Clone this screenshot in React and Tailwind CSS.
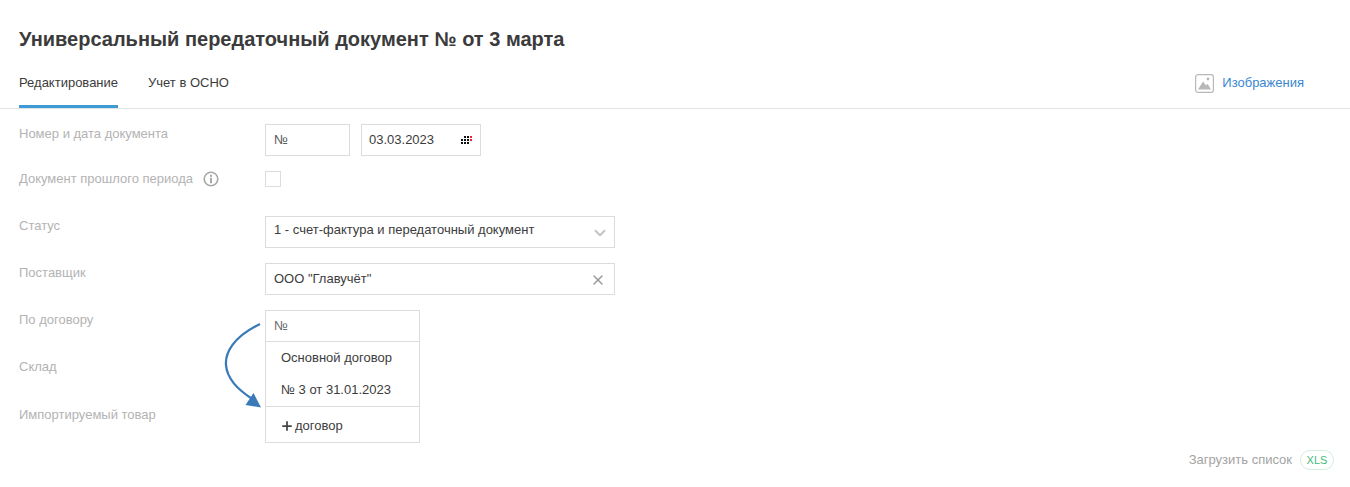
import React from "react";
import { X, ChevronDown, Plus } from "lucide-react";

const labelClass = "w-[246px] shrink-0 pt-[1px] leading-[18px] text-[#b3b3b3]";
const boxClass = "flex h-8 items-center border border-[#dcdcdc] bg-white pl-2";

function CalendarDots() {
  const dots = [
    [3, 0], [6, 0],
    [3, 3], [6, 3], [0, 3],
    [0, 6], [3, 6], [6, 6],
  ];
  return (
    <svg width="11" height="9" viewBox="0 0 11 9" aria-hidden="true">
      {dots.map(([x, y]) => (
        <rect key={`${x}-${y}`} x={x} y={y} width="2" height="2" fill="#111" />
      ))}
      <rect x="9" y="0" width="2" height="2" fill="#ee2233" />
      <rect x="9" y="3" width="2" height="2" fill="#ee2233" />
    </svg>
  );
}

function InfoIcon() {
  return (
    <svg width="16" height="16" viewBox="0 0 16 16" aria-hidden="true">
      <circle cx="8" cy="8" r="6.8" fill="none" stroke="#a8a8a8" strokeWidth="1.6" />
      <rect x="7" y="3.8" width="2" height="2" fill="#a8a8a8" />
      <rect x="7" y="6.8" width="2" height="5.4" fill="#a8a8a8" />
    </svg>
  );
}

function ImageIcon() {
  return (
    <svg width="19" height="19" viewBox="0 0 19 19" aria-hidden="true">
      <rect x="0.6" y="0.6" width="17.8" height="17.8" rx="2.5" fill="none" stroke="#b8b8b8" strokeWidth="1.2" />
      <circle cx="13" cy="5" r="1.4" fill="#b8b8b8" />
      <path d="M3 15.5 L8 7.5 L11 11.5 L12.6 9.8 L16 15.5 Z" fill="#b8b8b8" />
    </svg>
  );
}

function CurveArrow() {
  return (
    <svg
      className="absolute left-[222px] top-[318px]"
      width="46"
      height="92"
      viewBox="0 0 46 92"
      aria-hidden="true"
    >
      <path d="M38 6 C 11 19, 3 35, 4 47 C 5 62, 19 74, 32 82" fill="none" stroke="#3a7ab8" strokeWidth="2.3" />
      <path d="M39 89.5 L23.5 87 L31.5 75 Z" fill="#3a7ab8" />
    </svg>
  );
}

export default function App() {
  return (
    <div className="relative h-[487px] w-[1350px] overflow-hidden bg-white font-['Liberation_Sans',sans-serif] text-[13px] text-[#3c3c3c]">
      <h1 className="px-[19px] pt-[26px] text-[20px] font-bold leading-[26px] text-[#3b3b3b]">
        Универсальный передаточный документ № от 3 марта
      </h1>

      <div className="mt-[16px] flex h-[41px] items-start justify-between border-b border-[#e2e2e2] pl-[19px] pr-[46px]">
        <div className="flex gap-[30px]">
          <div className="h-[40px] border-b-[3px] border-[#3f9bd6] pt-[6px] leading-[18px]">Редактирование</div>
          <div className="pt-[6px] leading-[18px]">Учет в ОСНО</div>
        </div>
        <a className="flex items-center gap-2 pt-[5px] leading-[20px] text-[#3a87cf]" href="#images">
          <ImageIcon />
          Изображения
        </a>
      </div>

      <div className="flex flex-col px-[19px] pt-[15px]">
        <div className="mb-[15px] flex">
          <div className={labelClass}>Номер и дата документа</div>
          <div className="flex gap-[11px]">
            <div className={`${boxClass} w-[85px] text-[#5a5a5a]`}>№</div>
            <div className={`${boxClass} w-[120px] justify-between !pl-[7px] pr-2`}>
              <span>03.03.2023</span>
              <CalendarDots />
            </div>
          </div>
        </div>

        <div className="mb-[15px] flex h-[30px]">
          <div className="flex h-4 w-[246px] shrink-0 items-center gap-[10px] text-[#b3b3b3]">
            Документ прошлого периода
            <InfoIcon />
          </div>
          <div className="h-4 w-4 border border-[#dcdcdc]" />
        </div>

        <div className="mb-[15px] flex">
          <div className={labelClass}>Статус</div>
          <div className={`${boxClass} w-[350px] justify-between pb-[4px] pr-[5px]`}>
            <span>1 - счет-фактура и передаточный документ</span>
            <ChevronDown size={18} strokeWidth={2.6} className="mt-[6px] text-[#c4c4c4]" />
          </div>
        </div>

        <div className="mb-[15px] flex">
          <div className={labelClass}>Поставщик</div>
          <div className={`${boxClass} w-[350px] justify-between pr-[8px]`}>
            <span>ООО "Главучёт"</span>
            <X size={16} strokeWidth={2.2} className="mt-[1px] text-[#999999]" />
          </div>
        </div>

        <div className="mb-[15px] flex h-8">
          <div className={labelClass}>По договору</div>
        </div>
        <div className="mb-[16px] flex h-8">
          <div className={labelClass}>Склад</div>
        </div>
        <div className="flex h-8">
          <div className={labelClass}>Импортируемый товар</div>
        </div>
      </div>

      {/* выпадающий список договоров поверх формы */}
      <div className="absolute left-[265px] top-[310px] w-[155px] border border-[#dcdcdc] bg-white">
        <div className="flex h-[31px] items-center border-b border-[#dcdcdc] pl-2 text-[#6b6b6b]">№</div>
        <div className="border-b border-[#dcdcdc]">
          <div className="flex h-8 items-center pl-[15px]">Основной договор</div>
          <div className="flex h-8 items-center pl-[15px]">№ 3 от 31.01.2023</div>
        </div>
        <div className="flex h-[35px] items-center gap-[1px] pl-[14px] pt-[2px]">
          <Plus size={14} strokeWidth={3} className="text-[#444]" />
          договор
        </div>
      </div>

      <CurveArrow />

      <div className="absolute right-4 top-[450px] flex items-center gap-2 text-[#a3a3a3]">
        Загрузить список
        <span className="flex h-5 w-[34px] items-center justify-center rounded-full border border-[#d3eedd] text-[11px] font-medium text-[#45b97c]">
          XLS
        </span>
      </div>
    </div>
  );
}
